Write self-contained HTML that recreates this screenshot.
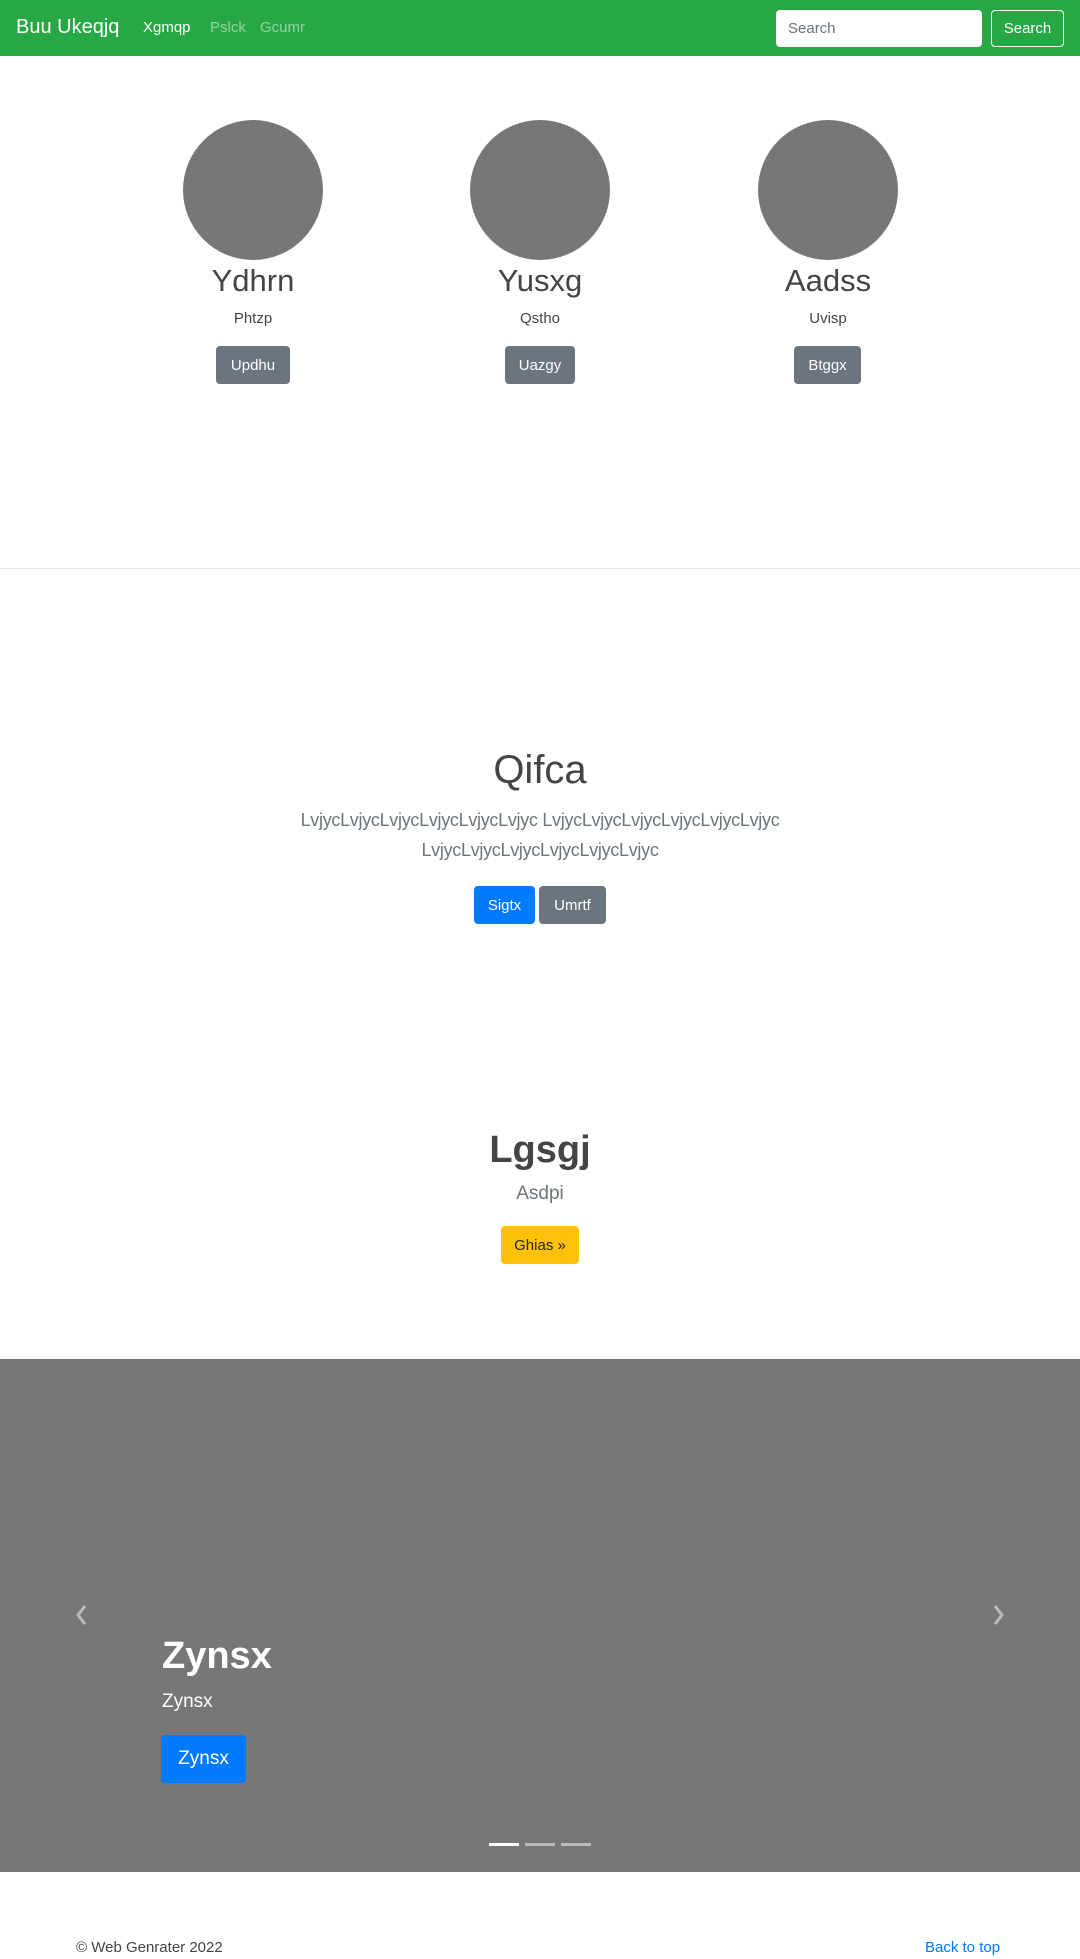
<!DOCTYPE html>
<html><head><meta charset="utf-8"><style>
*{box-sizing:border-box;margin:0;padding:0}
body{width:1080px;height:1959px;font-family:"Liberation Sans",sans-serif;color:#212529;background:#fff;position:relative;overflow:hidden}
.abs{position:absolute}
.c{text-align:center}
.btn{position:absolute;border-radius:4px;color:#fff;font-size:15px;display:flex;align-items:center;justify-content:center}
.sec{background:#6c757d}
</style></head><body>
<div class="abs" style="left:0;top:0;width:1080px;height:56px;background:#28a745"></div>
<div class="abs" style="left:16px;top:16px;font-size:20px;color:#fff">Buu Ukeqjq</div>
<div class="abs" style="left:143px;top:19px;font-size:15px;color:#fff">Xgmqp</div>
<div class="abs" style="left:210px;top:19px;font-size:15px;color:rgba(255,255,255,.5)">Pslck</div>
<div class="abs" style="left:260px;top:19px;font-size:15px;color:rgba(255,255,255,.5)">Gcumr</div>
<div class="abs" style="left:776px;top:10px;width:206px;height:37px;background:#fff;border-radius:4px;font-size:15px;color:#6c757d;padding:10px 12px">Search</div>
<div class="abs" style="left:991px;top:10px;width:73px;height:37px;border:1px solid #fff;border-radius:4px;color:#fff;font-size:15px;display:flex;align-items:center;justify-content:center">Search</div>

<div class="abs" style="left:183px;top:120px;width:140px;height:140px;border-radius:50%;background:#777"></div>
<div class="abs" style="left:470px;top:120px;width:140px;height:140px;border-radius:50%;background:#777"></div>
<div class="abs" style="left:758px;top:120px;width:140px;height:140px;border-radius:50%;background:#777"></div>
<div class="abs c" style="left:153px;top:263px;width:200px;font-size:31px;color:#444">Ydhrn</div>
<div class="abs c" style="left:440px;top:263px;width:200px;font-size:31px;color:#444">Yusxg</div>
<div class="abs c" style="left:728px;top:263px;width:200px;font-size:31px;color:#444">Aadss</div>
<div class="abs c" style="left:153px;top:310px;width:200px;font-size:15px;color:#444">Phtzp</div>
<div class="abs c" style="left:440px;top:310px;width:200px;font-size:15px;color:#444">Qstho</div>
<div class="abs c" style="left:728px;top:310px;width:200px;font-size:15px;color:#444">Uvisp</div>
<div class="btn sec" style="left:216px;top:346px;width:74px;height:38px">Updhu</div>
<div class="btn sec" style="left:505px;top:346px;width:70px;height:38px">Uazgy</div>
<div class="btn sec" style="left:794px;top:346px;width:67px;height:38px">Btggx</div>

<div class="abs" style="left:0;top:568px;width:1080px;height:1px;background:#e5e5e5"></div>

<div class="abs c" style="left:0;top:748px;width:1080px;font-size:40px;font-weight:300;color:#444">Qifca</div>
<div class="abs c" style="left:0;top:805px;width:1080px;font-size:18px;line-height:30px;color:#6c757d;letter-spacing:-0.3px">LvjycLvjycLvjycLvjycLvjycLvjyc LvjycLvjycLvjycLvjycLvjycLvjyc<br>LvjycLvjycLvjycLvjycLvjycLvjyc</div>
<div class="btn" style="left:474px;top:886px;width:61px;height:38px;background:#007bff">Sigtx</div>
<div class="btn sec" style="left:539px;top:886px;width:67px;height:38px">Umrtf</div>

<div class="abs c" style="left:0;top:1129px;width:1080px;font-size:38px;font-weight:bold;color:#444">Lgsgj</div>
<div class="abs c" style="left:0;top:1183px;width:1080px;font-size:19px;color:#6c757d">Asdpi</div>
<div class="btn" style="left:501px;top:1226px;width:78px;height:38px;background:#ffc107;color:#212529;font-size:15px">Ghias »</div>

<div class="abs" style="left:0;top:1359px;width:1080px;height:513px;background:#777"></div>
<svg class="abs" style="left:72px;top:1603px" width="20" height="24" viewBox="0 0 20 24"><path d="M13 3 L6 12 L13 21" stroke="#bbb" stroke-width="3" fill="none"/></svg>
<svg class="abs" style="left:988px;top:1603px" width="20" height="24" viewBox="0 0 20 24"><path d="M7 3 L14 12 L7 21" stroke="#bbb" stroke-width="3" fill="none"/></svg>
<div class="abs" style="left:162px;top:1635px;font-size:38px;font-weight:bold;color:#fff">Zynsx</div>
<div class="abs" style="left:162px;top:1691px;font-size:19px;color:#fff">Zynsx</div>
<div class="btn" style="left:161px;top:1735px;width:85px;height:48px;background:#007bff;font-size:19px">Zynsx</div>
<div class="abs" style="left:489px;top:1843px;width:30px;height:3px;background:#fff"></div>
<div class="abs" style="left:525px;top:1843px;width:30px;height:3px;background:rgba(255,255,255,.5)"></div>
<div class="abs" style="left:561px;top:1843px;width:30px;height:3px;background:rgba(255,255,255,.5)"></div>

<div class="abs" style="left:76px;top:1939px;font-size:15px;color:#444">© Web Genrater 2022</div>
<div class="abs" style="left:925px;top:1939px;font-size:15px;color:#007bff">Back to top</div>
</body></html>
